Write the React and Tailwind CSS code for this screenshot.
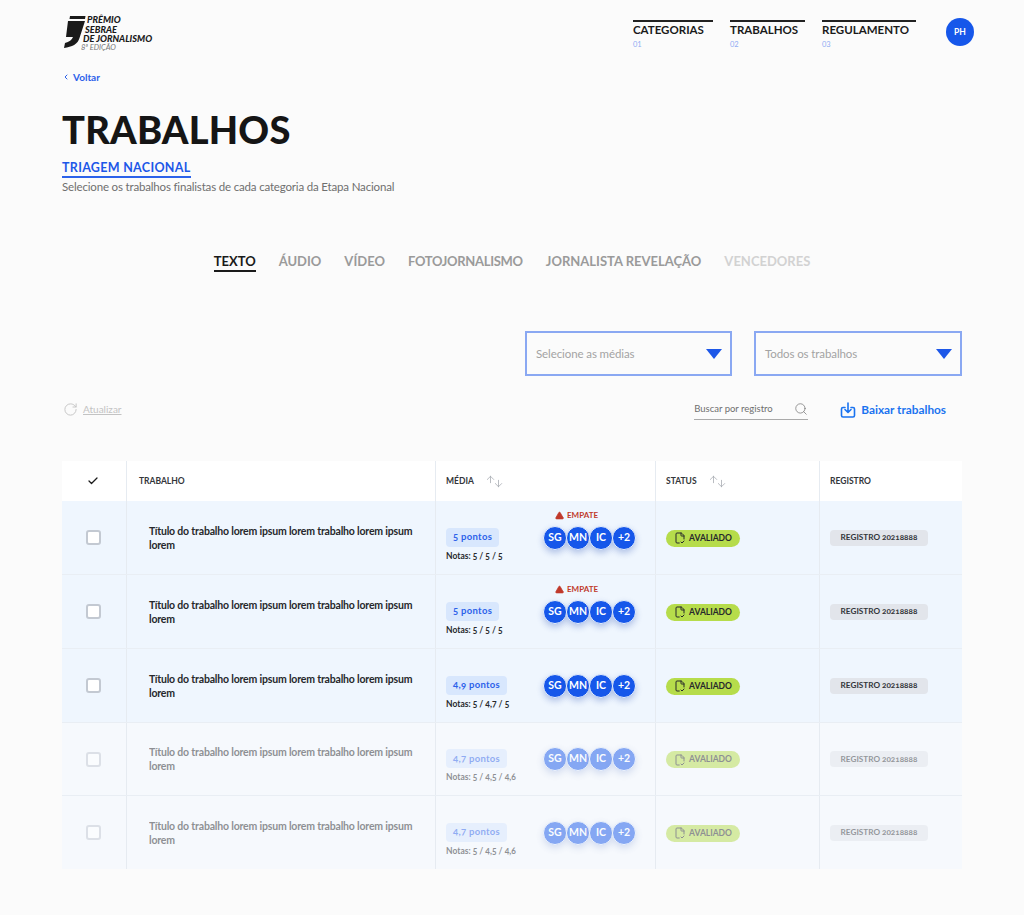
import { Check, ChevronLeft, Search, RotateCw, FileCheck2, ArrowUp, ArrowDown, TriangleAlert } from 'lucide-react'

const rows = [
  { nota: '5 pontos', notas: 'Notas: 5 / 5 / 5', empate: true, h: 'h-[74px]' },
  { nota: '5 pontos', notas: 'Notas: 5 / 5 / 5', empate: true, h: 'h-[74px]' },
  { nota: '4,9 pontos', notas: 'Notas: 5 / 4,7 / 5', empate: false, h: 'h-[74px]' },
  { nota: '4,7 pontos', notas: 'Notas: 5 / 4,5 / 4,6', empate: false, faded: true, h: 'h-[73px]' },
  { nota: '4,7 pontos', notas: 'Notas: 5 / 4,5 / 4,6', empate: false, faded: true, last: true, h: 'h-[73px]' },
]

const tabs = [
  { label: 'ÁUDIO', color: 'text-[#9a9a9a]' },
  { label: 'VÍDEO', color: 'text-[#9a9a9a]' },
  { label: 'FOTOJORNALISMO', color: 'text-[#9a9a9a] tracking-[-0.3px]' },
  { label: 'JORNALISTA REVELAÇÃO', color: 'text-[#9a9a9a]' },
  { label: 'VENCEDORES', color: 'text-[#d2d2d2]' },
]

const navItems = [
  { label: 'CATEGORIAS', num: '01', w: 'w-[80px] mr-[17px]' },
  { label: 'TRABALHOS', num: '02', w: 'w-[75px] mr-[17px]' },
  { label: 'REGULAMENTO', num: '03', w: 'w-[94px] mr-[16px]' },
]

const gridCols = 'grid grid-cols-[65px_309px_220px_164px_142px]'

function SortIcon() {
  return (
    <span className="flex items-start text-[#a0a5ab]">
      <ArrowUp size={11} strokeWidth={1.6} />
      <ArrowDown size={11} strokeWidth={1.6} className="mt-[4px] -ml-[3px]" />
    </span>
  )
}

function Select({ label, width }) {
  return (
    <div className={`${width} h-[45px] border-2 border-[#8aa8f2] flex items-center justify-between pl-[9px] pr-[8px]`}>
      <span className="text-[11.5px] tracking-[-0.1px] text-[#a3a3a3]">{label}</span>
      <svg width="16" height="10" viewBox="0 0 16 10">
        <path d="M0 0h16L8 10z" fill="#1d57e8" />
      </svg>
    </div>
  )
}

function Avatar({ text }) {
  return (
    <span className="w-[24px] h-[24px] -ml-[1px] first:ml-0 rounded-full bg-[#1657ea] text-white text-[10.5px] font-bold flex items-center justify-center shadow-[0_3px_6px_rgba(40,80,180,0.3)] border border-[#e8f0fc]">
      {text}
    </span>
  )
}

function Row({ row }) {
  const cell = row.faded ? 'opacity-50' : ''
  return (
    <div className={`${gridCols} ${row.h} ${row.faded ? 'bg-[#f6f9fd]' : 'bg-[#eff6fe]'} ${row.last ? '' : 'border-b border-[#e9eef4]'}`}>
      <div className="flex items-center justify-center pr-[2px] border-r border-[#e6ebf1]">
        <span className={`w-[15px] h-[15px] rounded-[3px] bg-white border-2 border-[#c3c9d2] ${cell}`} />
      </div>
      <div className="flex items-center pl-[22px] pr-[17px] border-r border-[#e6ebf1]">
        <p className={`text-[10.5px] leading-[14px] font-bold tracking-[-0.18px] text-[#26282b] ${cell}`}>
          Título do trabalho lorem ipsum lorem trabalho lorem ipsum lorem
        </p>
      </div>
      <div className="relative flex items-center justify-between pl-[10px] pr-[19px] border-r border-[#e6ebf1]">
        <div className={`flex flex-col items-start gap-[3px] mt-[15px] ${cell}`}>
          <span className="h-[19px] px-[7px] rounded-[4px] bg-[#d8e7fd] text-[#2c62ea] text-[9.5px] font-bold tracking-[0.3px] flex items-center oldstyle-nums">
            {row.nota}
          </span>
          <span className="text-[8.5px] font-bold text-[#26282b] oldstyle-nums">{row.notas}</span>
        </div>
        <div className={`flex ${cell}`}>
          {['SG', 'MN', 'IC', '+2'].map((t) => (
            <Avatar key={t} text={t} />
          ))}
        </div>
        {row.empate && (
          <span className="absolute top-[8px] left-[119px] flex items-center gap-[3px] text-[8px] font-bold text-[#c0392b]">
            <TriangleAlert size={9} fill="#c0392b" stroke="#c0392b" />
            EMPATE
          </span>
        )}
      </div>
      <div className="flex items-center pl-[10px] border-r border-[#e6ebf1]">
        <span className={`h-[17px] w-[74px] mt-[1px] rounded-full bg-[#b6dc4b] flex items-center justify-center gap-[3px] text-[8.5px] font-bold text-[#26282b] ${cell}`}>
          <FileCheck2 size={12} />
          AVALIADO
        </span>
      </div>
      <div className="flex items-center pl-[10px]">
        <span className={`h-[16px] w-[98px] rounded-[4px] bg-[#e2e5eb] flex items-center justify-center text-[8.2px] font-bold text-[#33363a] oldstyle-nums ${cell}`}>
          REGISTRO 20218888
        </span>
      </div>
    </div>
  )
}

export default function App() {
  return (
    <div className="w-[1024px] h-[915px] overflow-hidden bg-[#fbfbfb] font-['Lato',sans-serif] text-[#1a1a1a]">
      <header className="flex justify-between pl-[64px] pr-[50px] pt-[15px] h-[70px]">
        <div className="flex items-start gap-[1px]">
          <svg width="22" height="33" viewBox="0 0 22 33" className="mt-[1px]">
            <path d="M6 0H21.5L21 3H5.5zM4 5H21L15.5 22C14 28 8 31 0 32L1 27C5 26 8 24 9 21H2z" fill="#1a1a1a" />
          </svg>
          <div className="italic text-[9.2px] leading-[9.5px] font-black whitespace-nowrap">
            <div>PRÊMIO</div>
            <div className="-ml-[2px]">SEBRAE</div>
            <div className="-ml-[4px]">DE JORNALISMO</div>
            <div className="-ml-[6px] font-normal text-[#777] text-[7.5px] leading-[8px]">8ª EDIÇÃO</div>
          </div>
        </div>
        <nav className="flex items-start">
          {navItems.map((n) => (
            <div key={n.label} className={`${n.w} border-t-2 border-[#222] pt-[1px] mt-[5px]`}>
              <div className="text-[11.5px] leading-[14px] font-bold whitespace-nowrap">{n.label}</div>
              <div className="text-[7.5px] leading-[9px] mt-[3px] text-[#8fabf3]">{n.num}</div>
            </div>
          ))}
          <div className="w-[28px] h-[28px] ml-[14px] mt-[3px] rounded-full bg-[#1657ea] text-white text-[8.5px] font-bold flex items-center justify-center">
            PH
          </div>
        </nav>
      </header>

      <main className="px-[62px]">
        <a className="flex items-center gap-[3px] text-[#2c62ea] text-[10px] font-bold leading-[14px]">
          <ChevronLeft size={8} strokeWidth={3} />
          <span>Voltar</span>
        </a>
        <h1 className="mt-[22px] text-[38px] leading-[46px] font-black tracking-[0.2px] text-[#151515]">TRABALHOS</h1>
        <div className="mt-[7px] w-fit border-b-2 border-[#2c62ea] text-[#1d57e8] text-[12.5px] leading-[17px] font-bold tracking-[0.3px]">
          TRIAGEM NACIONAL
        </div>
        <p className="text-[11.5px] leading-[16px] mt-[1px] tracking-[-0.17px] text-[#6f6f6f]">
          Selecione os trabalhos finalistas de cada categoria da Etapa Nacional
        </p>

        <div className="mt-[57px] flex justify-center gap-[23px] font-bold text-[13px] leading-[18px]">
          <span className="border-b-2 border-[#1a1a1a] text-[#1a1a1a]">TEXTO</span>
          {tabs.map((t) => (
            <span key={t.label} className={t.color}>{t.label}</span>
          ))}
        </div>

        <div className="mt-[59px] flex justify-end gap-[22px]">
          <Select label="Selecione as médias" width="w-[207px]" />
          <Select label="Todos os trabalhos" width="w-[208px]" />
        </div>

        <div className="mt-[23px] flex items-center justify-between">
          <div className="flex items-center gap-[5px] pl-[1px] text-[#c3c3c3]">
            <RotateCw size={15} strokeWidth={1.5} />
            <span className="text-[10px] underline">Atualizar</span>
          </div>
          <div className="flex items-center pr-[16px]">
            <div className="w-[114px] h-[21px] border-b border-[#aaa] flex items-center justify-between text-[#6f6f6f]">
              <span className="text-[9.5px]">Buscar por registro</span>
              <Search size={14} strokeWidth={1.2} />
            </div>
            <div className="ml-[32px] mt-[1px] flex items-center gap-[5px] text-[#1a73f0] text-[11.8px] font-bold">
              <svg width="16" height="16" viewBox="0 0 16 16" fill="none" stroke="currentColor" strokeWidth="1.6" strokeLinecap="round" strokeLinejoin="round">
                <path d="M5 5.5H3A1.5 1.5 0 0 0 1.5 7v6.5A1.5 1.5 0 0 0 3 15h10a1.5 1.5 0 0 0 1.5-1.5V7A1.5 1.5 0 0 0 13 5.5h-2" />
                <path d="M8 1v9M5 7.500 8 10.500 11 7.500" />
              </svg>
              Baixar trabalhos
            </div>
          </div>
        </div>

        <section className="mt-[41px]">
          <div className={`${gridCols} h-[40px] bg-white text-[8.5px] font-bold text-[#33363a]`}>
            <div className="flex items-center justify-center pr-[2px] border-r border-[#e6ebf1]">
              <Check size={12} strokeWidth={2.5} className="text-[#1a1a1a]" />
            </div>
            <div className="flex items-center pl-[12px] pt-[1px] border-r border-[#e6ebf1]">TRABALHO</div>
            <div className="flex items-center gap-[11px] pl-[10px] pt-[1px] border-r border-[#e6ebf1]">
              MÉDIA
              <SortIcon />
            </div>
            <div className="flex items-center gap-[11px] pl-[10px] pt-[1px] border-r border-[#e6ebf1]">
              STATUS
              <SortIcon />
            </div>
            <div className="flex items-center pl-[10px] pt-[1px]">REGISTRO</div>
          </div>
          {rows.map((row, i) => (
            <Row key={i} row={row} />
          ))}
        </section>
      </main>
    </div>
  )
}
